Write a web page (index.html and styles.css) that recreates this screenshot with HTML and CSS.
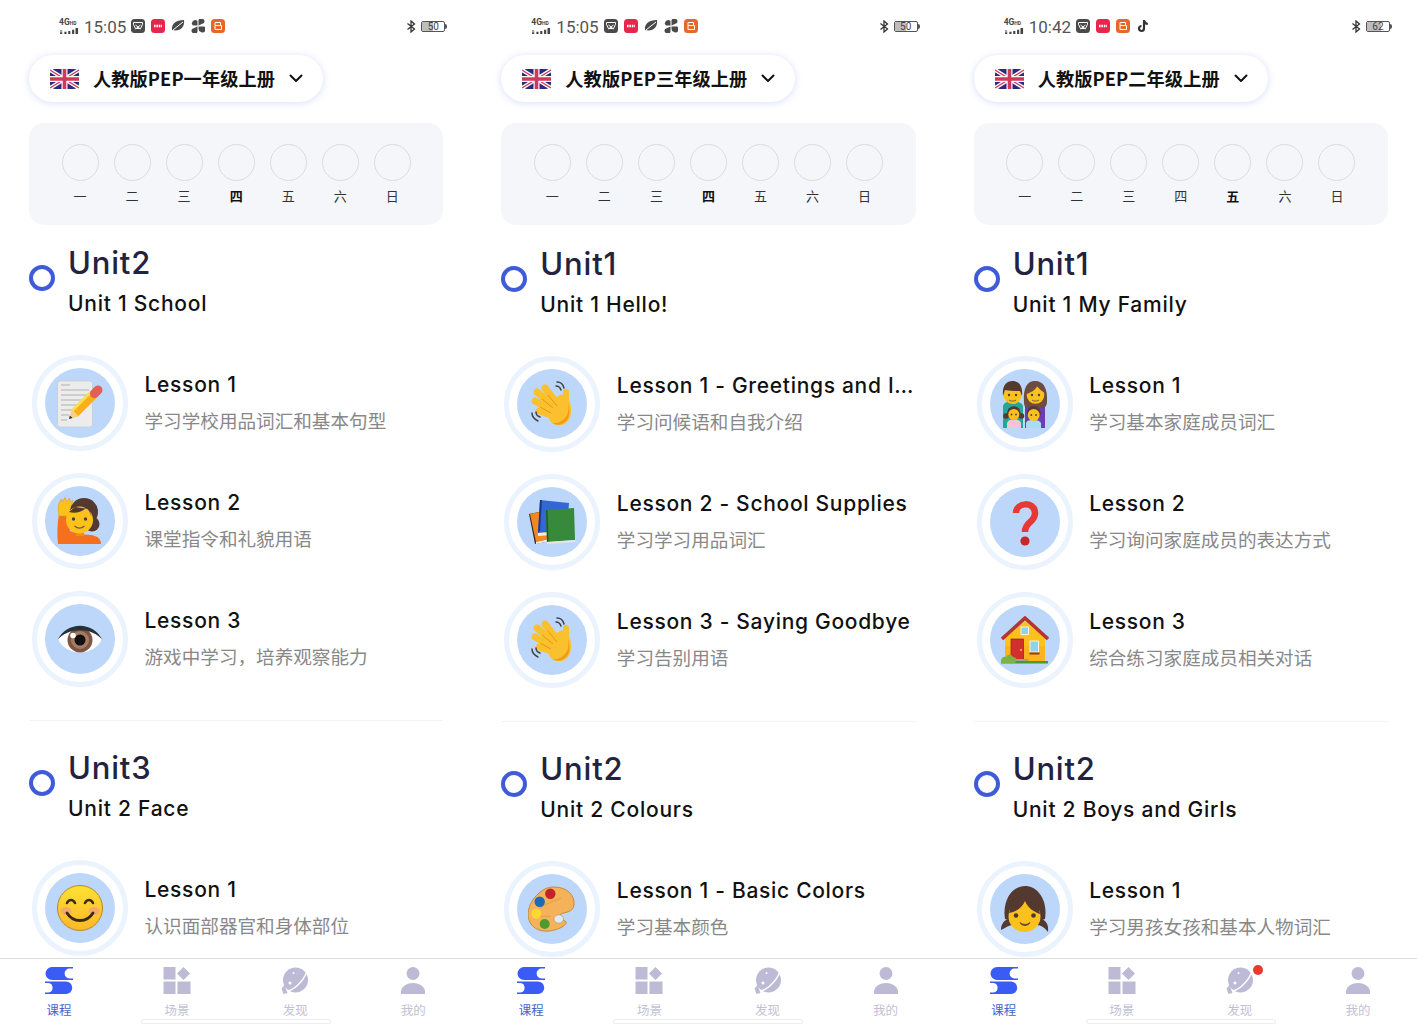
FILE: index.html
```html
<!DOCTYPE html>
<html lang="zh-CN">
<head>
<meta charset="utf-8">
<title>课程</title>
<link rel="stylesheet" href="styles.css">
</head>
<body>
<svg class="defs" width="0" height="0" aria-hidden="true">
  <defs>
    <linearGradient id="g-yellow" x1="0" y1="0" x2="0" y2="1"><stop offset="0" stop-color="#fee133"/><stop offset="1" stop-color="#fbb827"/></linearGradient>
    <symbol id="e-memo" viewBox="0 0 48 48">
      <rect x="1.5" y="2" width="35" height="46" rx="2.5" fill="#ececec" stroke="#cfcfcf"/>
      <path d="M5 6h9M5 11h28M5 16h28M5 21h24M5 26h18M5 31h12M5 36h8M5 41h6" stroke="#b0b0b0" stroke-width="1.2"/>
      <path d="M13 40l2.500-9 7 6.500z" fill="#f5d28a"/><path d="M13 40l.9-3.500 2.600 2.500z" fill="#333"/>
      <path d="M19 34L38 15" stroke="#fbb01a" stroke-width="9"/><path d="M16.500 31.500L35 13" stroke="#fde047" stroke-width="2.500"/>
      <path d="M38.500 14.500l3.500-3.500" stroke="#e35d5b" stroke-width="9" stroke-linecap="round"/>
    </symbol>
    <symbol id="e-raise" viewBox="0 0 48 48">
      <path d="M2 47C1 38 1 28 3 17h10l1 17 9 3 12 1c7 1 10 4 10 9z" fill="#f4701f"/>
      <path d="M3 19C2 14 2 10 3 6l2.500-4 1 3 2.500-4.500 1.500 4 3-3.500.5 4 3-1.500-2 6-3 9.500z" fill="#fcc21b" stroke="#e59a0c" stroke-width=".6"/>
      <circle cx="28" cy="15" r="14" fill="#543930"/><circle cx="36" cy="27" r="7.500" fill="#543930"/>
      <rect x="20" y="32" width="8" height="7" fill="#e59600"/>
      <ellipse cx="23.500" cy="23" rx="13.500" ry="13.500" fill="#fcc21b"/>
      <path d="M13 15c6 2 14 0 18-5l5 10-3-8-14-2z" fill="#543930"/>
      <circle cx="17.500" cy="22" r="1.700" fill="#444"/><circle cx="29.500" cy="22" r="1.700" fill="#444"/>
      <path d="M18.500 29c3 2.500 7 2.500 10 0" stroke="#795548" stroke-width="1.300" fill="none"/>
    </symbol>
    <symbol id="e-eye" viewBox="0 0 48 48">
      <path d="M2 24C12 9 36 9 46 24 38 42 10 42 2 24z" fill="#fff"/>
      <path d="M6 31c10 9 26 9 36 0-8 9-28 9-36 0z" fill="#c9c9d0"/>
      <circle cx="24" cy="25" r="12.500" fill="#7b5645"/><circle cx="24" cy="25" r="9" fill="#a87a5f"/>
      <circle cx="24" cy="25" r="5.500" fill="#111"/><circle cx="17" cy="20.500" r="2.800" fill="#fff"/>
      <path d="M1.500 25C11 6 37 6 46.500 25 36 12 12 12 1.500 25z" fill="#263238"/>
    </symbol>
    <symbol id="e-smile" viewBox="0 0 48 48">
      <circle cx="24" cy="24" r="22.500" fill="url(#g-yellow)" stroke="#b7862a" stroke-width="1"/>
      <ellipse cx="10" cy="27" rx="5.500" ry="4" fill="#f59e7d" opacity=".75"/><ellipse cx="38" cy="27" rx="5.500" ry="4" fill="#f59e7d" opacity=".75"/>
      <path d="M11 19c2-4 6-4 8 0M29 19c2-4 6-4 8 0" stroke="#3a2a1a" stroke-width="2.600" fill="none" stroke-linecap="round"/>
      <path d="M11 29c6 10 20 10 26 0" stroke="#3a2a1a" stroke-width="2.800" fill="none" stroke-linecap="round"/>
    </symbol>
    <symbol id="e-wave" viewBox="0 0 48 48">
      <g fill="none" stroke="#fbc02d" stroke-linecap="round">
        <path d="M34 30L17 8" stroke-width="7"/><path d="M30 30L9 12" stroke-width="7"/><path d="M28 33L7 21" stroke-width="7"/><path d="M28 37L11 31" stroke-width="6.500"/><path d="M38 27V12" stroke-width="6"/>
      </g>
      <path d="M16 24L34 14 42 22C44 32 43 38 39 42 34 47 27 46 22 41z" fill="#fbc02d"/>
      <path d="M37 38c3-3 4-8 3-15 2 7 2 13-1 17-4 5-10 6-15 3 5 1 10-1 13-5z" fill="#f19a14"/>
      <path d="M20 15l9 11M14 19l11 9M12 27l11 6" stroke="#e8960f" stroke-width="1" fill="none"/>
      <path d="M29 2c3 0 6 2 7 6M28 6c2 0 4 1 5 4M4 33c0 4 2 6 6 8M8 32c0 2 1 4 4 5" stroke="#424242" stroke-width="1.500" fill="none" stroke-linecap="round"/>
    </symbol>
    <symbol id="e-books" viewBox="0 0 48 48">
      <path d="M1 16l15-3 6 30-15 3z" fill="#3b2a20"/><path d="M2 16l14-3 5 28-13 3z" fill="#f08a1d"/><path d="M8 44l13-3 1 2-14 3z" fill="#eee"/>
      <path d="M12 2l29 3-2 27-29 3z" fill="#3367d6"/><path d="M12 2l2 0-2 31-2 2z" fill="#1a3a85"/><path d="M10 35l14-1v3l-14 1z" fill="#eee"/>
      <path d="M18 12l28-2 1 32-28 2z" fill="#378a3c"/><path d="M18 12l1.500 0 1 31-1.500 1z" fill="#1b5e20"/><path d="M19 44l28-2v2l-28 2z" fill="#e6e6e6"/>
    </symbol>
    <symbol id="e-palette" viewBox="0 0 48 48">
      <path d="M26 2C40 2 47 11 46 20c-1 8-10 7-13 9-2 2 1 6 4 7 2 1 1 4-3 6-9 5-24 7-31-3C-3 30 1 17 10 9 15 4 20 2 26 2z" fill="#f4b35a" stroke="#c58a37" stroke-width="1"/>
      <path d="M12 23c6-5 13-6 21-10M8 33c8-3 11-1 15-2" stroke="#e59a45" stroke-width="1" fill="none"/>
      <circle cx="22.300" cy="8.700" r="5.200" fill="#c4222c"/><circle cx="11.700" cy="16.700" r="5.200" fill="#1a6bb8"/><circle cx="8.300" cy="28.700" r="5" fill="#fbd930"/><circle cx="16.700" cy="39" r="5" fill="#4d9a2e"/>
      <ellipse cx="30.700" cy="34" rx="4.800" ry="4.200" fill="#dfe9f7" stroke="#c58a37" stroke-width=".6"/>
    </symbol>
    <symbol id="e-family" viewBox="0 0 48 48">
      <path d="M2 48V26c1-4 6-5 10-5s9 2 10 5v22z" fill="#26a69a"/>
      <path d="M24 48V26c2-4 6-5 10-5s9 2 10 6v21z" fill="#6a3fb5"/>
      <path d="M23 22c-1-14 3-21 11-21s13 7 12 21c0 3-2 6-4 6H26c-2 0-3-3-3-6z" fill="#6d4c41"/>
      <circle cx="34.500" cy="15" r="8.800" fill="#fcc21b"/><path d="M25 14c4-1 10-4 11-8 2 3 6 6 9 8l-3-10-8-3-7 4z" fill="#6d4c41"/>
      <circle cx="11.500" cy="15" r="9" fill="#fcc21b"/><path d="M2 16C1 6 5 1 11.500 1S22 6 21 16l-2-5c-5 0-11 0-15-1z" fill="#543930"/>
      <circle cx="8" cy="15" r="1.200" fill="#444"/><circle cx="15" cy="15" r="1.200" fill="#444"/><circle cx="31" cy="15" r="1.200" fill="#444"/><circle cx="38" cy="15" r="1.200" fill="#444"/>
      <path d="M8 20c2 1.500 5 1.500 7 0M31 20c2 1.500 5 1.500 7 0" stroke="#795548" stroke-width="1" fill="none"/>
      <path d="M6 48v-5c1-3 4-4 7-4s6 1 7 4v5z" fill="#f3c3d8"/><path d="M25 48v-5c1-3 4-3 8-3s6 1 7 3v5z" fill="#a9ddf4"/>
      <circle cx="12.800" cy="33" r="6.800" fill="#543930"/><circle cx="5" cy="36" r="2.800" fill="#543930"/><circle cx="20.500" cy="36" r="2.800" fill="#543930"/><circle cx="12.800" cy="34.500" r="5.500" fill="#fcc21b"/>
      <circle cx="32.700" cy="33" r="7" fill="#543930"/><circle cx="32.700" cy="35" r="6" fill="#fcc21b"/>
      <circle cx="10.500" cy="34.500" r=".9" fill="#444"/><circle cx="15" cy="34.500" r=".9" fill="#444"/><circle cx="30.300" cy="35" r=".9" fill="#444"/><circle cx="35" cy="35" r=".9" fill="#444"/>
    </symbol>
    <symbol id="e-question" viewBox="0 0 48 48">
      <path d="M15 15C15 4 34 3 34 15 34 25 24 23 24 34" fill="none" stroke="#e53935" stroke-width="6.500"/>
      <circle cx="24" cy="43" r="4.600" fill="#c62828"/>
    </symbol>
    <symbol id="e-house" viewBox="0 0 48 48">
      <path d="M4 22L24 5 44 22V45H4z" fill="#fcc21b"/><path d="M4 30h40v15H4z" fill="#f9b51a"/>
      <path d="M1 23L24 2 47 23" fill="none" stroke="#b5342c" stroke-width="3.600" stroke-linejoin="round"/>
      <rect x="20" y="11" width="7.500" height="7.500" fill="#8dd3ea" stroke="#fff" stroke-width=".8"/>
      <rect x="10" y="23" width="12.500" height="21" fill="#d32f2f" stroke="#8e2020" stroke-width=".7"/><circle cx="20" cy="34" r="1.100" fill="#fcc21b"/>
      <rect x="29" y="25" width="8.500" height="11" fill="#8dd3ea" stroke="#fff" stroke-width=".8"/><rect x="28.500" y="36.500" width="10" height="2" fill="#8e3b2a"/>
      <path d="M14 46h12l2-3H15z" fill="#9e9e9e"/>
      <rect x="0" y="45" width="47" height="2.500" fill="#4c9a2a"/>
      <path d="M0 47c-1-5 3-7 5-6 1-3 6-3 7 0 3 0 5 3 2 6z" fill="#7cb342"/>
    </symbol>
    <symbol id="e-girl" viewBox="0 0 48 48">
      <path d="M0 45c0-6 3-10 8-11l4 6c-4 0-8 3-12 5z" fill="#543930"/><path d="M47 47c1-7-2-12-7-13l-4 6c4 0 8 3 11 7z" fill="#543930"/>
      <path d="M4 34C1 14 12 1 24 1s23 13 20 33l-6 2H10z" fill="#543930"/>
      <ellipse cx="23.500" cy="31.500" rx="16" ry="15.500" fill="#fcc21b"/>
      <path d="M8 28c7-1 13-5 16-12 3 7 9 11 15 13l-3-15H12z" fill="#543930"/>
      <circle cx="15" cy="30.500" r="2.300" fill="#4a3a2a"/><circle cx="32.500" cy="30.500" r="2.300" fill="#4a3a2a"/>
      <path d="M19 37.500c3 2.500 7 2.500 10 0-2 4-8 4-10 0z" fill="#5d4037" stroke="#5d4037" stroke-width=".8"/>
    </symbol>
    <symbol id="flag" viewBox="0 0 29 20">
      <rect width="29" height="20" rx="5" fill="#2b2a7d"/>
      <path d="M0 1L29 19M29 1L0 19" stroke="#fff" stroke-width="4"/>
      <path d="M0 1L29 19M29 1L0 19" stroke="#cf3a5b" stroke-width="1.400"/>
      <path d="M14.500 0v20M0 10h29" stroke="#fff" stroke-width="6"/>
      <path d="M14.500 0v20M0 10h29" stroke="#cf3a5b" stroke-width="3.600"/>
    </symbol>
    <symbol id="chev" viewBox="0 0 14 9"><path d="M1.500 1.500L7 7l5.500-5.500" fill="none" stroke="#111" stroke-width="2" stroke-linecap="round" stroke-linejoin="round"/></symbol>
    <symbol id="t-course" viewBox="0 0 28 27">
      <path d="M28 0H7a6.500 6.500 0 0 0 0 13h21v-1.600h-3.500a4.200 4.200 0 0 1 0-9.800H28z" fill="#3a5bf5"/>
      <path d="M0 14.500h21a6.250 6.250 0 0 1 0 12.500H0v-1.500h3.500a4.800 4.800 0 0 0 0-9.500H0z" fill="#3a5bf5"/>
    </symbol>
    <symbol id="t-scene" viewBox="0 0 27 27">
      <g fill="#bcbad4"><rect width="12" height="12.500"/><rect y="14.500" width="12" height="12.500"/><rect x="14" y="14.500" width="13" height="12.500"/><path d="M20 0l6.500 6.500L20 13l-6.500-6.500z"/></g>
    </symbol>
    <symbol id="t-find" viewBox="0 0 27 27">
      <circle cx="14" cy="13" r="12.500" fill="#bcbad4"/>
      <path d="M1 24.500c9 1 20-8 25-21" fill="none" stroke="#fff" stroke-width="1.500"/>
      <path d="M0 21.500L3 18 6 26 2 27z" fill="#bcbad4"/>
      <circle cx="12" cy="6" r="1" fill="#fff"/><circle cx="8.500" cy="16" r="1.500" fill="#fff"/>
    </symbol>
    <symbol id="t-me" viewBox="0 0 27 27">
      <circle cx="13.500" cy="6.500" r="6.500" fill="#bcbad4"/><path d="M1.500 27c-1-7 5-11 12-11s13 4 12 11z" fill="#bcbad4"/>
    </symbol>
    <symbol id="s-signal" viewBox="0 0 22 7">
      <path d="M0 3h2.500v1H0zM0 5h2.500v2H0zM5 4.500h2.500V7H5zM9.500 3.500H12V7H9.500zM14 2h2.500v5H14zM18 0h3v7h-3z" fill="#444"/>
    </symbol>
    <symbol id="s-dark" viewBox="0 0 14 14">
      <rect width="14" height="14" rx="3.500" fill="#4a4a4a"/>
      <path d="M2.500 3.500h9v2l-2 4h-5l-2-4zM4.500 6l5 4M9.500 6l-5 4" fill="none" stroke="#fff" stroke-width="1"/>
    </symbol>
    <symbol id="s-red" viewBox="0 0 14 14">
      <rect width="14" height="14" rx="3.500" fill="#e8264c"/>
      <path d="M3 7h8" stroke="#fff" stroke-width="2.500" stroke-dasharray="1.600 .8"/>
    </symbol>
    <symbol id="s-leaf" viewBox="0 0 14 14">
      <path d="M1 11C0 5 5 1 13 1c1 7-4 12-12 10z" fill="#4a4a4a"/><path d="M2 11L12 3" stroke="#fff" stroke-width="1"/>
    </symbol>
    <symbol id="s-fan" viewBox="0 0 14 14">
      <g fill="#4a4a4a"><path d="M6.500 6.500H2A3 3 0 1 1 6.500 2z"/><path d="M7.500 6.500V1a3 3 0 1 1 5.500 3z"/><path d="M7.500 7.500H13a3 3 0 1 1-3 5.500 3 3 0 0 1-2.500-3z"/><path d="M6.500 7.500V13a3 3 0 1 1-5.500-3z"/></g>
    </symbol>
    <symbol id="s-orange" viewBox="0 0 14 14">
      <rect width="14" height="14" rx="3.500" fill="#e5682a"/>
      <path d="M4 3.500h5.500v3H4zM4 6.500h6.500v4H4z" fill="none" stroke="#fff" stroke-width="1"/>
    </symbol>
    <symbol id="s-tiktok" viewBox="0 0 14 14">
      <path d="M8 1v8.500a2.500 2.500 0 1 1-2.500-2.500M8 1.500c.4 2 1.700 3.200 3.800 3.500" fill="none" stroke="#333" stroke-width="2.200"/>
    </symbol>
    <symbol id="s-bt" viewBox="0 0 10 13">
      <path d="M1.500 3.500l7 5.500L5 12V1l3.500 3-7 5.500" fill="none" stroke="#333" stroke-width="1.300"/>
    </symbol>
  </defs>
</svg>

<main class="panel panel-first">
  <div class="status">
    <div class="status-left">
      <div class="net"><span class="net-label">4G<small>HD</small></span><svg class="net-bars"><use href="#s-signal"/></svg></div>
      <span class="time">15:05</span>
      <svg class="s-icon"><use href="#s-dark"/></svg>
      <svg class="s-icon"><use href="#s-red"/></svg>
      <svg class="s-icon"><use href="#s-leaf"/></svg>
      <svg class="s-icon"><use href="#s-fan"/></svg>
      <svg class="s-icon"><use href="#s-orange"/></svg>
    </div>
    <div class="status-right">
      <svg class="bt"><use href="#s-bt"/></svg>
      <div class="battery"><span class="battery-fill fill-50"></span><span class="battery-num">50</span></div>
    </div>
  </div>
  <div class="selector">
    <svg class="flag"><use href="#flag"/></svg>
    <span class="selector-name">人教版PEP一年级上册</span>
    <svg class="chev"><use href="#chev"/></svg>
  </div>
  <div class="week">
    <div class="day"><span class="day-dot"></span><span class="day-name">一</span></div>
    <div class="day"><span class="day-dot"></span><span class="day-name">二</span></div>
    <div class="day"><span class="day-dot"></span><span class="day-name">三</span></div>
    <div class="day today"><span class="day-dot"></span><span class="day-name">四</span></div>
    <div class="day"><span class="day-dot"></span><span class="day-name">五</span></div>
    <div class="day"><span class="day-dot"></span><span class="day-name">六</span></div>
    <div class="day"><span class="day-dot"></span><span class="day-name">日</span></div>
  </div>
  <div class="units">
    <section class="unit">
      <header class="unit-head"><span class="unit-dot"></span><div class="unit-text"><h2 class="unit-title">Unit2</h2><p class="unit-sub">Unit 1 School</p></div></header>
      <div class="lessons">
        <div class="lesson"><div class="ring"><div class="disc"><svg class="emoji"><use href="#e-memo"/></svg></div></div><div class="lesson-text"><div class="lesson-title">Lesson 1</div><div class="lesson-desc">学习学校用品词汇和基本句型</div></div></div>
        <div class="lesson"><div class="ring"><div class="disc"><svg class="emoji"><use href="#e-raise"/></svg></div></div><div class="lesson-text"><div class="lesson-title">Lesson 2</div><div class="lesson-desc">课堂指令和礼貌用语</div></div></div>
        <div class="lesson"><div class="ring"><div class="disc"><svg class="emoji"><use href="#e-eye"/></svg></div></div><div class="lesson-text"><div class="lesson-title">Lesson 3</div><div class="lesson-desc">游戏中学习，培养观察能力</div></div></div>
      </div>
    </section>
    <hr class="divider">
    <section class="unit">
      <header class="unit-head"><span class="unit-dot"></span><div class="unit-text"><h2 class="unit-title">Unit3</h2><p class="unit-sub">Unit 2 Face</p></div></header>
      <div class="lessons">
        <div class="lesson"><div class="ring"><div class="disc"><svg class="emoji"><use href="#e-smile"/></svg></div></div><div class="lesson-text"><div class="lesson-title">Lesson 1</div><div class="lesson-desc">认识面部器官和身体部位</div></div></div>
      </div>
    </section>
  </div>
  <nav class="tabbar">
    <div class="tabs">
      <div class="tab tab-on"><span class="tab-icon"><svg class="tab-svg"><use href="#t-course"/></svg></span><span class="tab-label">课程</span></div>
      <div class="tab"><span class="tab-icon"><svg class="tab-svg"><use href="#t-scene"/></svg></span><span class="tab-label">场景</span></div>
      <div class="tab"><span class="tab-icon"><svg class="tab-svg"><use href="#t-find"/></svg></span><span class="tab-label">发现</span></div>
      <div class="tab"><span class="tab-icon"><svg class="tab-svg"><use href="#t-me"/></svg></span><span class="tab-label">我的</span></div>
    </div>
    <div class="home-bar"></div>
  </nav>
</main>

<main class="panel">
  <div class="status">
    <div class="status-left">
      <div class="net"><span class="net-label">4G<small>HD</small></span><svg class="net-bars"><use href="#s-signal"/></svg></div>
      <span class="time">15:05</span>
      <svg class="s-icon"><use href="#s-dark"/></svg>
      <svg class="s-icon"><use href="#s-red"/></svg>
      <svg class="s-icon"><use href="#s-leaf"/></svg>
      <svg class="s-icon"><use href="#s-fan"/></svg>
      <svg class="s-icon"><use href="#s-orange"/></svg>
    </div>
    <div class="status-right">
      <svg class="bt"><use href="#s-bt"/></svg>
      <div class="battery"><span class="battery-fill fill-50"></span><span class="battery-num">50</span></div>
    </div>
  </div>
  <div class="selector">
    <svg class="flag"><use href="#flag"/></svg>
    <span class="selector-name">人教版PEP三年级上册</span>
    <svg class="chev"><use href="#chev"/></svg>
  </div>
  <div class="week">
    <div class="day"><span class="day-dot"></span><span class="day-name">一</span></div>
    <div class="day"><span class="day-dot"></span><span class="day-name">二</span></div>
    <div class="day"><span class="day-dot"></span><span class="day-name">三</span></div>
    <div class="day today"><span class="day-dot"></span><span class="day-name">四</span></div>
    <div class="day"><span class="day-dot"></span><span class="day-name">五</span></div>
    <div class="day"><span class="day-dot"></span><span class="day-name">六</span></div>
    <div class="day"><span class="day-dot"></span><span class="day-name">日</span></div>
  </div>
  <div class="units">
    <section class="unit">
      <header class="unit-head"><span class="unit-dot"></span><div class="unit-text"><h2 class="unit-title">Unit1</h2><p class="unit-sub">Unit 1 Hello!</p></div></header>
      <div class="lessons">
        <div class="lesson"><div class="ring"><div class="disc"><svg class="emoji"><use href="#e-wave"/></svg></div></div><div class="lesson-text"><div class="lesson-title">Lesson 1 - Greetings and I…</div><div class="lesson-desc">学习问候语和自我介绍</div></div></div>
        <div class="lesson"><div class="ring"><div class="disc"><svg class="emoji"><use href="#e-books"/></svg></div></div><div class="lesson-text"><div class="lesson-title">Lesson 2 - School Supplies</div><div class="lesson-desc">学习学习用品词汇</div></div></div>
        <div class="lesson"><div class="ring"><div class="disc"><svg class="emoji"><use href="#e-wave"/></svg></div></div><div class="lesson-text"><div class="lesson-title">Lesson 3 - Saying Goodbye</div><div class="lesson-desc">学习告别用语</div></div></div>
      </div>
    </section>
    <hr class="divider">
    <section class="unit">
      <header class="unit-head"><span class="unit-dot"></span><div class="unit-text"><h2 class="unit-title">Unit2</h2><p class="unit-sub">Unit 2 Colours</p></div></header>
      <div class="lessons">
        <div class="lesson"><div class="ring"><div class="disc"><svg class="emoji"><use href="#e-palette"/></svg></div></div><div class="lesson-text"><div class="lesson-title">Lesson 1 - Basic Colors</div><div class="lesson-desc">学习基本颜色</div></div></div>
      </div>
    </section>
  </div>
  <nav class="tabbar">
    <div class="tabs">
      <div class="tab tab-on"><span class="tab-icon"><svg class="tab-svg"><use href="#t-course"/></svg></span><span class="tab-label">课程</span></div>
      <div class="tab"><span class="tab-icon"><svg class="tab-svg"><use href="#t-scene"/></svg></span><span class="tab-label">场景</span></div>
      <div class="tab"><span class="tab-icon"><svg class="tab-svg"><use href="#t-find"/></svg></span><span class="tab-label">发现</span></div>
      <div class="tab"><span class="tab-icon"><svg class="tab-svg"><use href="#t-me"/></svg></span><span class="tab-label">我的</span></div>
    </div>
    <div class="home-bar"></div>
  </nav>
</main>

<main class="panel">
  <div class="status">
    <div class="status-left">
      <div class="net"><span class="net-label">4G<small>HD</small></span><svg class="net-bars"><use href="#s-signal"/></svg></div>
      <span class="time">10:42</span>
      <svg class="s-icon"><use href="#s-dark"/></svg>
      <svg class="s-icon"><use href="#s-red"/></svg>
      <svg class="s-icon"><use href="#s-orange"/></svg>
      <svg class="s-icon"><use href="#s-tiktok"/></svg>
    </div>
    <div class="status-right">
      <svg class="bt"><use href="#s-bt"/></svg>
      <div class="battery"><span class="battery-fill fill-62"></span><span class="battery-num">62</span></div>
    </div>
  </div>
  <div class="selector">
    <svg class="flag"><use href="#flag"/></svg>
    <span class="selector-name">人教版PEP二年级上册</span>
    <svg class="chev"><use href="#chev"/></svg>
  </div>
  <div class="week">
    <div class="day"><span class="day-dot"></span><span class="day-name">一</span></div>
    <div class="day"><span class="day-dot"></span><span class="day-name">二</span></div>
    <div class="day"><span class="day-dot"></span><span class="day-name">三</span></div>
    <div class="day"><span class="day-dot"></span><span class="day-name">四</span></div>
    <div class="day today"><span class="day-dot"></span><span class="day-name">五</span></div>
    <div class="day"><span class="day-dot"></span><span class="day-name">六</span></div>
    <div class="day"><span class="day-dot"></span><span class="day-name">日</span></div>
  </div>
  <div class="units">
    <section class="unit">
      <header class="unit-head"><span class="unit-dot"></span><div class="unit-text"><h2 class="unit-title">Unit1</h2><p class="unit-sub">Unit 1 My Family</p></div></header>
      <div class="lessons">
        <div class="lesson"><div class="ring"><div class="disc"><svg class="emoji"><use href="#e-family"/></svg></div></div><div class="lesson-text"><div class="lesson-title">Lesson 1</div><div class="lesson-desc">学习基本家庭成员词汇</div></div></div>
        <div class="lesson"><div class="ring"><div class="disc"><svg class="emoji"><use href="#e-question"/></svg></div></div><div class="lesson-text"><div class="lesson-title">Lesson 2</div><div class="lesson-desc">学习询问家庭成员的表达方式</div></div></div>
        <div class="lesson"><div class="ring"><div class="disc"><svg class="emoji"><use href="#e-house"/></svg></div></div><div class="lesson-text"><div class="lesson-title">Lesson 3</div><div class="lesson-desc">综合练习家庭成员相关对话</div></div></div>
      </div>
    </section>
    <hr class="divider">
    <section class="unit">
      <header class="unit-head"><span class="unit-dot"></span><div class="unit-text"><h2 class="unit-title">Unit2</h2><p class="unit-sub">Unit 2 Boys and Girls</p></div></header>
      <div class="lessons">
        <div class="lesson"><div class="ring"><div class="disc"><svg class="emoji"><use href="#e-girl"/></svg></div></div><div class="lesson-text"><div class="lesson-title">Lesson 1</div><div class="lesson-desc">学习男孩女孩和基本人物词汇</div></div></div>
      </div>
    </section>
  </div>
  <nav class="tabbar">
    <div class="tabs">
      <div class="tab tab-on"><span class="tab-icon"><svg class="tab-svg"><use href="#t-course"/></svg></span><span class="tab-label">课程</span></div>
      <div class="tab"><span class="tab-icon"><svg class="tab-svg"><use href="#t-scene"/></svg></span><span class="tab-label">场景</span></div>
      <div class="tab"><span class="tab-icon"><svg class="tab-svg"><use href="#t-find"/></svg><span class="tab-badge"></span></span><span class="tab-label">发现</span></div>
      <div class="tab"><span class="tab-icon"><svg class="tab-svg"><use href="#t-me"/></svg></span><span class="tab-label">我的</span></div>
    </div>
    <div class="home-bar"></div>
  </nav>
</main>
</body>
</html>
```
FILE: styles.css
```css
* { box-sizing: border-box; }

html, body { height: 100%; }

body {
  margin: 0;
  display: flex;
  background: #fff;
  overflow: hidden;
  font-family: "Inter", "Noto Sans CJK SC", sans-serif;
  color: #111;
}

.defs { flex: none; }

.panel {
  flex: 1 1 0;
  min-width: 0;
  height: 1024px;
  display: flex;
  flex-direction: column;
  overflow: hidden;
}

/* status bar */
.status {
  flex: none;
  height: 52px;
  padding: 0 27px 0 59px;
  display: flex;
  align-items: center;
  justify-content: space-between;
}
.status-left { display: flex; align-items: center; }
.net {
  width: 21px;
  margin-right: 4px;
  display: flex;
  flex-direction: column;
  gap: 1px;
}
.net-label {
  display: block;
  font: 700 8.5px/7px "Roboto", sans-serif;
  color: #444;
  white-space: nowrap;
}
.net-label small { font-size: 5px; font-weight: 700; }
.net-bars { display: block; width: 21px; height: 6px; }
.time {
  font: 400 17px/20px "Roboto", sans-serif;
  color: #555;
  margin: 2px 5px 0 0;
}
.s-icon { width: 14px; height: 14px; margin-right: 6px; }
.status-right { display: flex; align-items: center; gap: 5px; }
.bt { width: 10px; height: 13px; }
.battery {
  width: 24px;
  height: 11px;
  border: 1px solid #555;
  border-radius: 2px;
  position: relative;
  display: flex;
  align-items: center;
  justify-content: center;
}
.battery::after {
  content: "";
  position: absolute;
  right: -3px;
  top: 2px;
  width: 2px;
  height: 5px;
  border-radius: 0 2px 2px 0;
  background: #555;
}
.battery-fill { position: absolute; left: 0; top: 0; bottom: 0; background: #bdbdbd; }
.fill-50 { width: 50%; }
.fill-62 { width: 62%; }
.battery-num { position: relative; font: 400 10px/9px "Roboto", sans-serif; color: #444; }

/* textbook selector */
.selector {
  flex: none;
  align-self: flex-start;
  margin: 3px 0 0 29px;
  width: 294px;
  height: 47px;
  border-radius: 24px;
  background: #fff;
  box-shadow: 0 1px 7px rgba(70, 100, 235, .22);
  display: flex;
  align-items: center;
  padding-left: 21px;
}
.flag { width: 29px; height: 20px; flex: none; }
.selector-name {
  margin: 0 0 2px 14px;
  font: 700 18.2px/24px "Noto Sans CJK SC", sans-serif;
  letter-spacing: .1px;
  color: #111;
  white-space: nowrap;
}
.chev { width: 14px; height: 9px; margin-left: 14px; flex: none; }

/* week card */
.week {
  flex: none;
  margin: 21px 29px 0;
  height: 102px;
  padding: 21px 33px 0;
  background: #f5f6fa;
  border-radius: 15px;
  display: flex;
  justify-content: space-between;
}
.day { width: 36px; display: flex; flex-direction: column; align-items: center; gap: 6px; }
.day-dot { width: 37px; height: 37px; flex: none; border-radius: 50%; border: 1px solid #dcdcdc; }
.day-name { font: 400 13px/18px "Noto Sans CJK SC", sans-serif; color: #333; }
.today .day-name { font-weight: 700; color: #111; }

/* units */
.units { flex: 1 1 0; min-height: 0; overflow: hidden; padding: 18px 29px 0; }
.panel-first .units { padding-top: 17px; }

.unit-head { display: flex; align-items: flex-start; gap: 13px; height: 81px; margin-bottom: 32px; }
.unit-dot { flex: none; width: 26px; height: 26px; margin-top: 23px; border-radius: 50%; border: 4px solid #3f5bd9; }
.unit-text { padding-top: 1px; }
.unit-title { margin: 0; font: 500 31px/40px "Inter", sans-serif; letter-spacing: .8px; color: #23233f; }
.unit-sub { margin: 1px 0 0; font: 500 21px/40px "Inter", sans-serif; letter-spacing: .75px; color: #111; }

.lessons { display: flex; flex-direction: column; gap: 22px; padding-left: 3px; }
.lesson { display: flex; align-items: flex-start; gap: 16.5px; }
.ring {
  flex: none;
  width: 96px;
  height: 96px;
  border-radius: 50%;
  border: 5px solid #ebf3fe;
  background: #fff;
  display: flex;
  align-items: center;
  justify-content: center;
}
.disc {
  width: 70px;
  height: 70px;
  border-radius: 50%;
  background: #bdd7fb;
  display: flex;
  align-items: center;
  justify-content: center;
}
.emoji { width: 48px; height: 48px; display: block; }
.lesson-text { flex: 1 1 0; min-width: 0; padding-top: 14px; }
.lesson-title {
  font: 500 21px/32px "Inter", sans-serif;
  letter-spacing: .7px;
  color: #111;
  white-space: nowrap;
}
.lesson-desc { margin-top: 5px; font: 400 18.6px/28px "Noto Sans CJK SC", sans-serif; color: #888; white-space: nowrap; }

.divider { margin: 33px 0 26px; height: 1px; border: 0; background: #f3f3f3; }

/* tab bar */
.tabbar { flex: none; height: 66px; border-top: 1px solid #ddd; background: #fff; }
.tabs { display: flex; height: 60px; }
.tab { flex: 1 1 0; display: flex; flex-direction: column; align-items: center; padding-top: 8px; }
.tab-icon { display: block; width: 28px; height: 27px; position: relative; }
.tab-svg { display: block; width: 28px; height: 27px; }
.tab-badge {
  position: absolute;
  right: -9px;
  top: -2px;
  width: 10px;
  height: 10px;
  border-radius: 50%;
  background: #ea3a30;
}
.tab-label { margin-top: 7px; font: 400 12.5px/18px "Noto Sans CJK SC", sans-serif; color: #c2c1d2; }
.tab-on .tab-label { color: #4a63c8; }
.home-bar { width: 190px; height: 5px; margin-left: 141px; border: 1px solid #ececec; border-radius: 3px; }
```
